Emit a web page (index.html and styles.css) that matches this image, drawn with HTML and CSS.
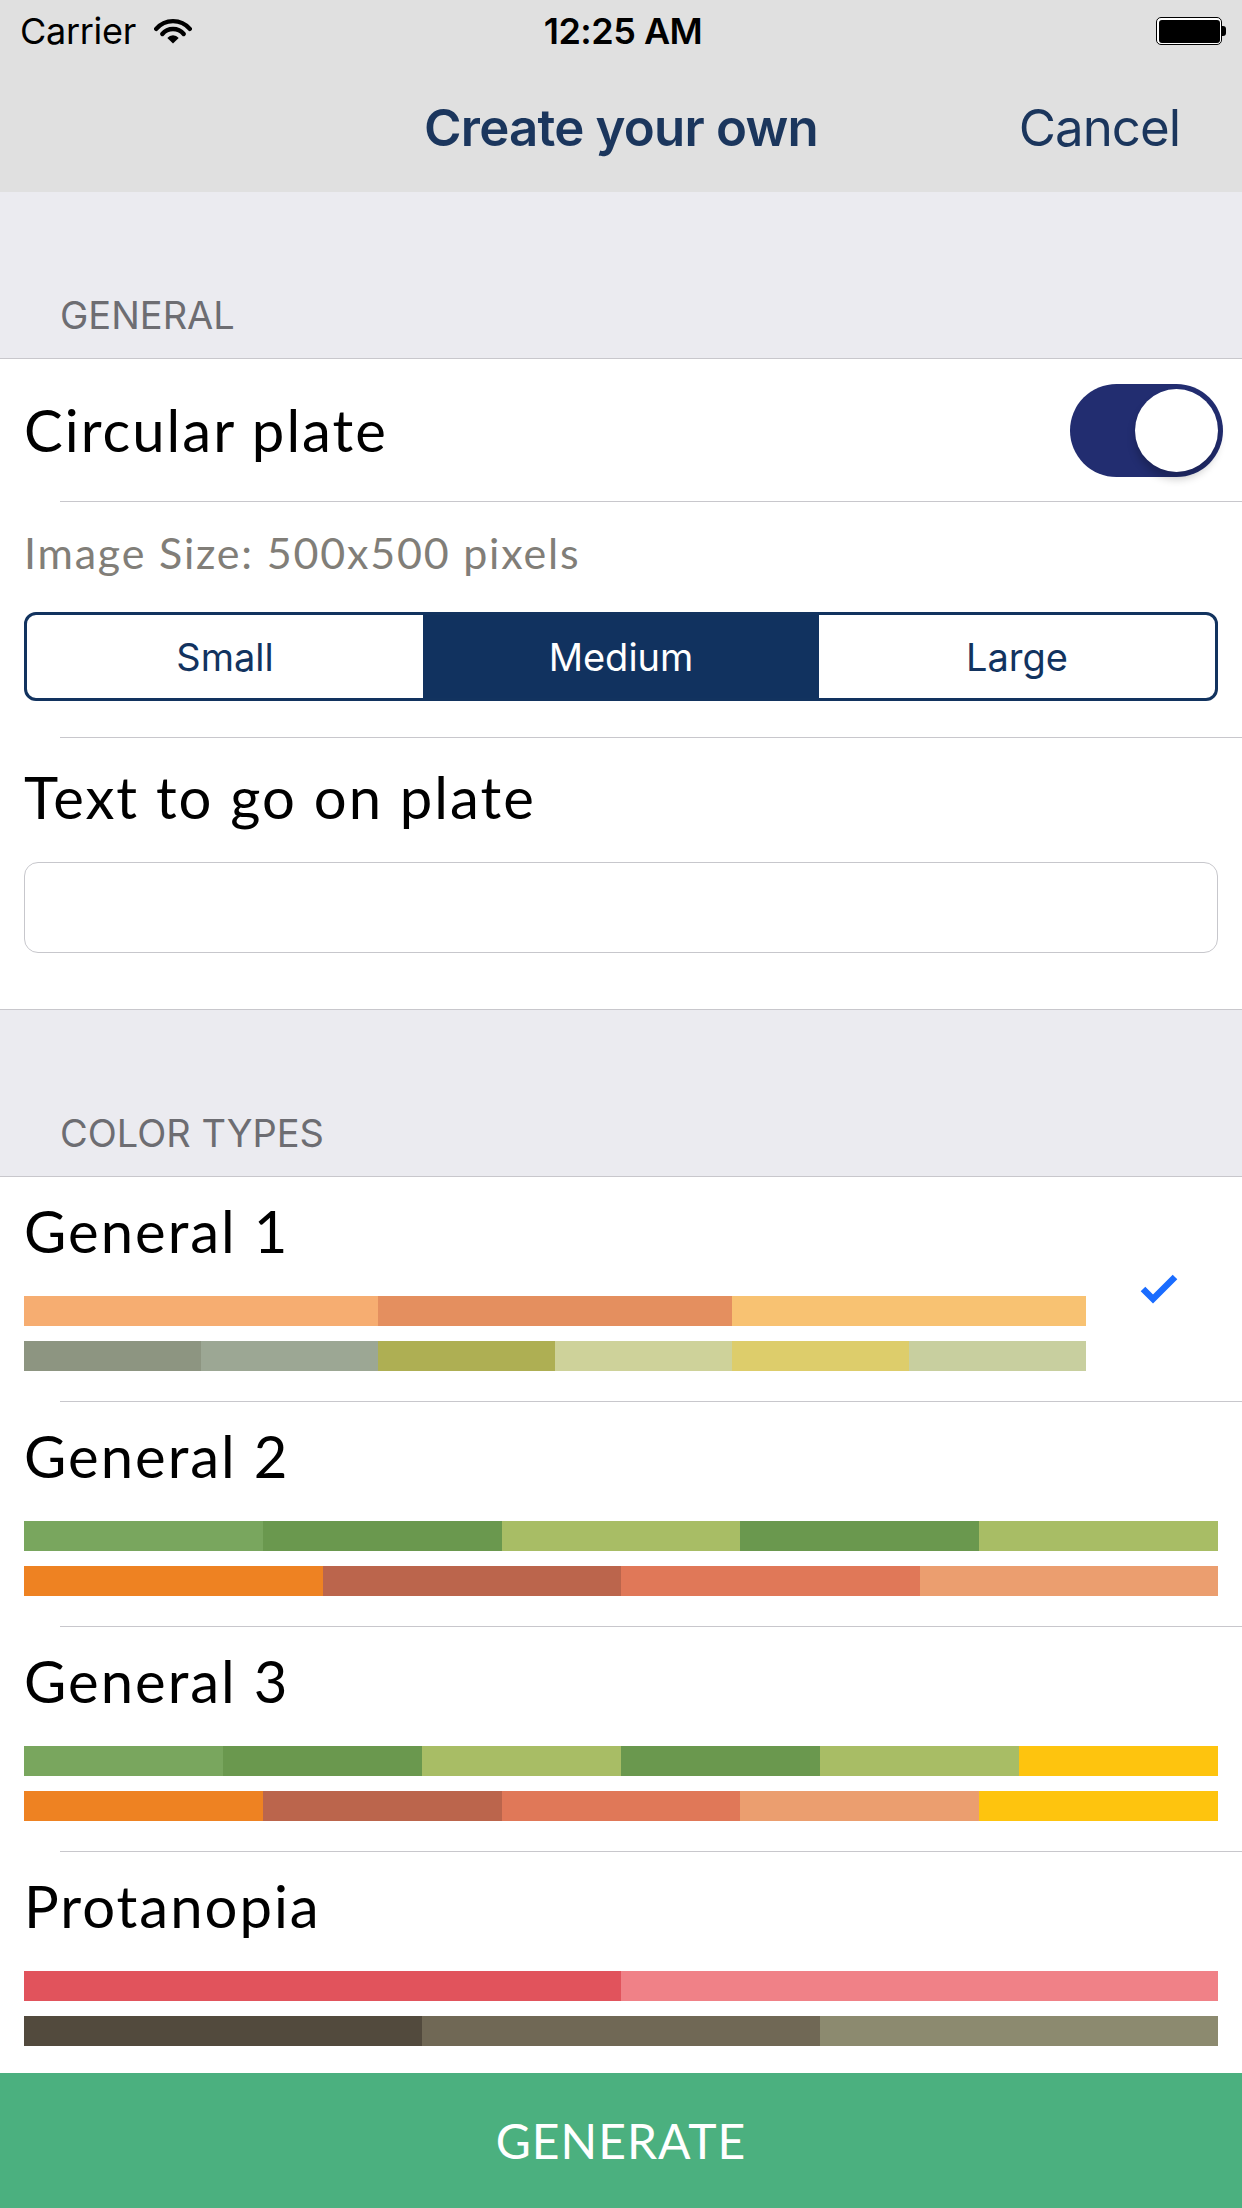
FILE: index.html
```html
<!DOCTYPE html>
<html lang="en">

<head>
  <meta charset="UTF-8">
  <meta name="viewport" content="width=device-width, initial-scale=1.0">
  <title>Create your own</title>
  <link rel="stylesheet" href="styles.css">
</head>

<body>
  <div id="header">
    <div class="status-bar">
      <div class="status-left">
        <span>Carrier</span>
        <svg class="wifi" width="38" height="27" viewBox="0 0 38 27">
          <path d="M2.2 11.9 A22 22 0 0 1 35.8 11.9" fill="none" stroke="#000" stroke-width="4.4" stroke-linecap="round" />
          <path d="M8.3 17 A14 14 0 0 1 29.7 17" fill="none" stroke="#000" stroke-width="4.4" stroke-linecap="round" />
          <path d="M13.3 21 A7.5 7.5 0 0 1 24.7 21 L19 26.5 Z" fill="#000" />
        </svg>
      </div>
      <div class="status-time">12:25 AM</div>
      <div class="status-right">
        <div class="battery"><div class="battery-fill"></div></div>
        <div class="battery-tip"></div>
      </div>
    </div>
    <div class="nav-bar">
      <div></div>
      <h1 class="nav-title">Create your own</h1>
      <div class="nav-cancel">Cancel</div>
    </div>
  </div>

  <div id="content">
    <div class="section-title">GENERAL</div>
    <div class="group">
      <div class="switch-row">
        <span class="label">Circular plate</span>
        <div class="toggle"><div class="toggle-knob"></div></div>
      </div>
      <div class="sep"></div>
      <div class="size-row">
        <div class="size-text">Image Size: 500x500 pixels</div>
        <div class="segmented">
          <div class="segment">Small</div>
          <div class="segment active">Medium</div>
          <div class="segment">Large</div>
        </div>
      </div>
      <div class="sep"></div>
      <div class="text-row">
        <div class="label">Text to go on plate</div>
        <input type="text" class="plate-input">
      </div>
    </div>

    <div class="section-title">COLOR TYPES</div>
    <div class="group">
      <div class="color-row">
        <div class="color-body">
          <div class="label">General 1</div>
          <div class="bar">
            <span style="background:#f6ad71"></span>
            <span style="background:#e48f5f"></span>
            <span style="background:#f8c272"></span>
          </div>
          <div class="bar">
            <span style="background:#8d9581"></span>
            <span style="background:#9ca794"></span>
            <span style="background:#aeaf53"></span>
            <span style="background:#ced29a"></span>
            <span style="background:#ddcd6b"></span>
            <span style="background:#c8cf9f"></span>
          </div>
        </div>
        <svg class="check" width="38" height="30" viewBox="0 0 38 30">
          <path d="M3 15 L13 25 L35 3" fill="none" stroke="#1a6cff" stroke-width="6.5" />
        </svg>
      </div>
      <div class="sep"></div>
      <div class="color-row">
        <div class="color-body">
          <div class="label">General 2</div>
          <div class="bar">
            <span style="background:#79a65e"></span>
            <span style="background:#6a984e"></span>
            <span style="background:#a8bd65"></span>
            <span style="background:#6a984e"></span>
            <span style="background:#a8bd65"></span>
          </div>
          <div class="bar">
            <span style="background:#ee8222"></span>
            <span style="background:#bb654c"></span>
            <span style="background:#e07858"></span>
            <span style="background:#eb9e6f"></span>
          </div>
        </div>
      </div>
      <div class="sep"></div>
      <div class="color-row">
        <div class="color-body">
          <div class="label">General 3</div>
          <div class="bar">
            <span style="background:#79a65e"></span>
            <span style="background:#6a984e"></span>
            <span style="background:#a8bd65"></span>
            <span style="background:#6a984e"></span>
            <span style="background:#a8bd65"></span>
            <span style="background:#fec40e"></span>
          </div>
          <div class="bar">
            <span style="background:#ee8222"></span>
            <span style="background:#bb654c"></span>
            <span style="background:#e07858"></span>
            <span style="background:#eb9e6f"></span>
            <span style="background:#fec40e"></span>
          </div>
        </div>
      </div>
      <div class="sep"></div>
      <div class="color-row">
        <div class="color-body">
          <div class="label">Protanopia</div>
          <div class="bar">
            <span style="background:#e1535c"></span>
            <span style="background:#f08187"></span>
          </div>
          <div class="bar">
            <span style="background:#524a3d"></span>
            <span style="background:#706855"></span>
            <span style="background:#8c8a6f"></span>
          </div>
        </div>
      </div>
    </div>
  </div>

  <button id="generate">GENERATE</button>
</body>

</html>
```

FILE: styles.css
```css
* {
  margin: 0;
  padding: 0;
  box-sizing: border-box;
}

body {
  width: 1242px;
  height: 2208px;
  display: flex;
  flex-direction: column;
  overflow: hidden;
  background: #fff;
  font-family: Lato, "Noto Sans", sans-serif;
}

/* header */

#header {
  background: #e0e0e0;
  height: 192px;
  flex-shrink: 0;
}

.status-bar {
  height: 62px;
  display: grid;
  grid-template-columns: 1fr auto 1fr;
  align-items: center;
  padding: 0 16px 0 20px;
  font-family: Inter, "Liberation Sans", sans-serif;
  font-size: 36px;
  color: #000;
}

.status-left {
  display: flex;
  align-items: center;
  gap: 18px;
}

.status-left span {
  letter-spacing: -0.3px;
}

.wifi {
  margin-top: -2px;
}

.status-time {
  font-weight: 600;
  letter-spacing: -0.5px;
}

.status-right {
  display: flex;
  justify-content: flex-end;
  align-items: center;
}

.battery {
  width: 66px;
  height: 28px;
  border: 1.5px solid #000;
  border-radius: 5px;
  padding: 1.5px;
  background: #fff;
}

.battery-fill {
  width: 100%;
  height: 100%;
  background: #000;
  border-radius: 3px;
}

.battery-tip {
  width: 4px;
  height: 10px;
  background: #000;
  border-radius: 0 3px 3px 0;
}

.nav-bar {
  height: 130px;
  display: grid;
  grid-template-columns: 1fr auto 1fr;
  align-items: center;
  padding: 0 62px;
  font-family: Inter, "Liberation Sans", sans-serif;
  font-size: 51px;
  color: #1b365d;
}

.nav-title {
  font-size: 51px;
  font-weight: 600;
  letter-spacing: -0.8px;
}

.nav-cancel {
  justify-self: end;
  letter-spacing: -1px;
}

/* content */

#content {
  flex: 1;
  overflow: hidden;
}

.section-title {
  height: 167px;
  display: flex;
  align-items: flex-end;
  padding: 0 0 20px 60px;
  background: #ebebf0;
  font-family: Inter, "Liberation Sans", sans-serif;
  font-size: 38px;
  line-height: 46px;
  color: #6d6d72;
  border-bottom: 1px solid #c8c7cc;
}

.group {
  background: #fff;
  border-bottom: 1px solid #c8c7cc;
}

.sep {
  height: 1px;
  margin-left: 60px;
  background: #c8c7cc;
}

.label {
  font-size: 58px;
  line-height: 70px;
  letter-spacing: 2px;
  color: #000;
}

.switch-row {
  height: 142px;
  display: flex;
  justify-content: space-between;
  align-items: center;
  padding: 0 19px 0 24px;
}

.toggle {
  width: 153px;
  height: 93px;
  border-radius: 47px;
  background: #222d70;
  display: flex;
  justify-content: flex-end;
  align-items: center;
  padding-right: 5px;
}

.toggle-knob {
  width: 83px;
  height: 83px;
  border-radius: 50%;
  background: #fff;
  box-shadow: 0 7px 9px rgba(0, 0, 0, 0.22);
}

.size-row {
  padding: 25px 24px 36px;
}

.size-text {
  font-size: 43px;
  line-height: 52px;
  letter-spacing: 1.8px;
  color: #817e78;
}

.segmented {
  margin-top: 33px;
  height: 89px;
  display: flex;
  border: 3px solid #12335f;
  border-radius: 12px;
  overflow: hidden;
}

.segment {
  flex: 1;
  display: flex;
  justify-content: center;
  align-items: center;
  font-family: Inter, "Liberation Sans", sans-serif;
  font-size: 38px;
  color: #12335f;
}

.segment.active {
  background: #11325f;
  color: #fff;
}

.text-row {
  padding: 24px 24px 56px;
}

.plate-input {
  display: block;
  width: 100%;
  height: 91px;
  margin-top: 30px;
  border: 1px solid #c7c7cc;
  border-radius: 14px;
  background: #fff;
}

.color-row {
  display: flex;
  align-items: center;
}

.color-body {
  flex: 1;
  padding: 19px 24px 30px;
}

.color-body .label {
  margin-bottom: 30px;
}

.bar {
  display: flex;
  height: 30px;
}

.bar + .bar {
  margin-top: 15px;
}

.bar span {
  flex: 1;
}

.check {
  margin: 0 64px 0 30px;
  flex-shrink: 0;
}

/* bottom button */

#generate {
  flex-shrink: 0;
  height: 135px;
  width: 100%;
  border: none;
  background: #4bb07f;
  color: #fff;
  font-family: Lato, "Noto Sans", sans-serif;
  font-size: 48px;
  letter-spacing: 1px;
}
```
